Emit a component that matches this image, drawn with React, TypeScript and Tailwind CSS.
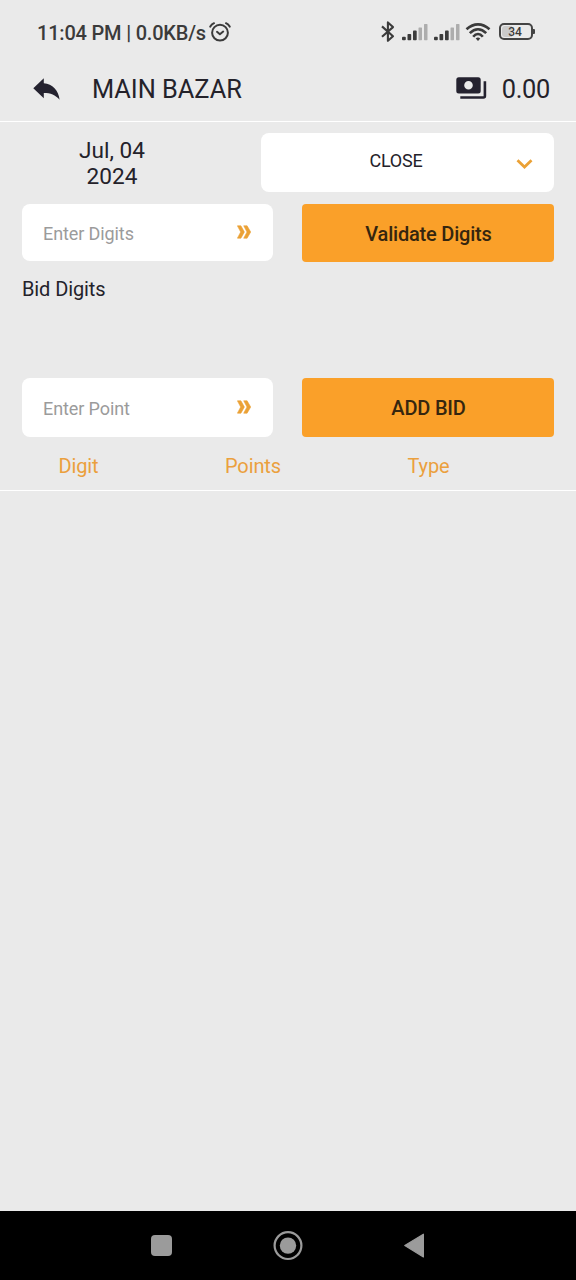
import React from 'react';
import clsx from 'clsx';

const SignalIcon: React.FC<{ className?: string }> = ({ className }) => (
  <svg viewBox="0 0 26 17" className={clsx('w-[26px] h-[17px] shrink-0', className)}>
    <g fill="#3b3b3b">
      <rect x="0" y="12.8" width="3.8" height="3.4" rx="1" />
      <rect x="5.5" y="9.9" width="3.7" height="6.3" rx="0.8" />
      <rect x="11" y="6.6" width="3.7" height="9.6" rx="0.8" />
    </g>
    <g fill="#adadad">
      <rect x="16.5" y="3.4" width="3.5" height="12.8" rx="0.6" />
      <rect x="22" y="0.1" width="3.5" height="16.1" rx="0.6" />
    </g>
  </svg>
);

const AlarmIcon = () => (
  <svg viewBox="0 0 22 20" className="w-[22px] h-5 shrink-0" fill="none" stroke="#3b3b3b" strokeWidth="2" strokeLinecap="round">
    <circle cx="11" cy="10.7" r="7.9" />
    <path d="M8 9.8l2.9 2.5 3.3-2.7" strokeLinejoin="round" />
    <path d="M1.3 4.6Q2.6 2.3 5 1.2M20.7 4.6Q19.4 2.3 17 1.2" />
  </svg>
);

const BluetoothIcon = () => (
  <svg viewBox="0 0 14 22" className="w-3.5 h-[22px] shrink-0" fill="none" stroke="#3b3b3b" strokeWidth="2.1" strokeLinejoin="round">
    <path d="M1 5.4L12 15.2 6.9 19.8V1.4L12 6.1 1 15.8" />
  </svg>
);

const WifiIcon = () => (
  <svg viewBox="0 0 26 19" className="w-[26px] h-[19px] shrink-0" fill="none" stroke="#3b3b3b" strokeWidth="2.6">
    <path d="M1.5 6.3Q7 1.4 13 1.4T24.5 6.3" />
    <path d="M4.8 10.2Q8.7 6.2 13 6.2T21.2 10.2" />
    <path d="M8.2 13.8Q10.4 11 13 11T17.8 13.8" />
    <path d="M10.7 15.4Q13 13.8 15.3 15.4L13 18z" fill="#3b3b3b" stroke="none" />
  </svg>
);

const BatteryIcon = () => (
  <div className="mb-px flex items-center shrink-0">
    <div className="w-[34px] h-[17px] rounded-[5px] border-2 border-[#444] p-px">
      <div className="h-full flex items-center justify-center rounded-[3px] bg-linear-to-r from-[#cbcbcb] from-34% to-transparent to-34% pt-px pr-0.5 text-[12px] leading-none font-medium text-[#3b3b3b]">
        34
      </div>
    </div>
    <div className="w-0.5 h-[5px] rounded-r-[1px] bg-[#444]" />
  </div>
);

const ReplyIcon = () => (
  <svg viewBox="0 0 27 22" className="w-[27px] h-[22px] shrink-0" fill="#24222f">
    <path d="M0.3 10.2L10.8 0.3V5.2C19.5 6 25.5 12 26.6 21.8C22.5 16.8 17.5 15 10.8 15V20.2z" />
  </svg>
);

const WalletIcon = () => (
  <svg viewBox="0 0 31 23" className="mb-0.5 w-[31px] h-[23px] shrink-0">
    <path fill="#24222f" fillRule="evenodd" d="M2.8 0.2H22.2A2.5 2.5 0 0 1 24.7 2.7V14A2.5 2.5 0 0 1 22.2 16.5H2.8A2.5 2.5 0 0 1 0.3 14V2.7A2.5 2.5 0 0 1 2.8 0.2zM12.5 4a4.3 4.3 0 1 0 0 8.6a4.3 4.3 0 0 0 0-8.6z" />
    <path fill="none" stroke="#24222f" strokeWidth="2.6" d="M28.9 4.2V19Q28.9 20.5 27.4 20.5H4.3" />
  </svg>
);

const DoubleArrow = () => (
  <svg viewBox="0 0 14 14" className="mb-px w-3.5 h-3.5 shrink-0" fill="#eba135" stroke="#eba135" strokeWidth="0.6" strokeLinejoin="round">
    <path d="M0.4 0.8H3.9L7.4 7 3.9 13.2H0.4L3.7 7zM6.7 0.8H10.1L13.7 7 10.1 13.2H6.7L10 7z" />
  </svg>
);

interface FieldProps {
  placeholder: string;
  className?: string;
}

const Field: React.FC<FieldProps> = ({ placeholder, className }) => (
  <div className={clsx('w-[251px] flex items-center justify-between rounded-lg bg-white pl-[21px] pr-[22px]', className)}>
    <span className="pt-0.5 text-[18px] leading-none tracking-[-0.1px] text-[#9b9b9b]">{placeholder}</span>
    <DoubleArrow />
  </div>
);

const Button: React.FC<{ children: React.ReactNode }> = ({ children }) => (
  <button className="w-[252px] rounded-[4px] bg-[#faa029] pt-px pl-px text-[20px] leading-none font-medium tracking-[-0.2px] text-[#35260f]">
    {children}
  </button>
);

export default function App() {
  return (
    <div className="w-[576px] h-[1280px] flex flex-col overflow-hidden bg-[#eaeaea] text-[#24222a] font-['Roboto',sans-serif]">
      {/* Status bar */}
      <div className="h-16 shrink-0 flex items-center pl-[37px] pr-[41px] text-[#3b3b3b]">
        <span className="w-[172px] pt-px whitespace-nowrap text-[20px] font-medium leading-none tracking-[-0.2px]">11:04 PM | 0.0KB/s</span>
        <AlarmIcon />
        <div className="ml-auto flex items-center">
          <BluetoothIcon />
          <SignalIcon className="ml-[7px]" />
          <SignalIcon className="ml-1.5" />
          <div className="ml-[5px] mr-2 flex"><WifiIcon /></div>
          <BatteryIcon />
        </div>
      </div>

      {/* Header */}
      <header className="h-[58px] shrink-0 flex items-center border-b border-white pl-[33px] pr-[26px] pb-[7px]">
        <ReplyIcon />
        <h1 className="ml-[31px] pl-px pt-0.5 text-[25.4px] leading-none tracking-[-0.05px]">MAIN BAZAR</h1>
        <div className="ml-auto flex items-center gap-[15px]">
          <WalletIcon />
          <span className="pt-0.5 text-[25.4px] leading-none tracking-[-0.3px]">0.00</span>
        </div>
      </header>

      {/* Bid form */}
      <main className="flex-1 flex flex-col">
        <div className="flex pt-[11px] px-[22px]">
          <div className="w-[180px] pt-[5px] text-center text-[22.6px] leading-[26px]">
            Jul, 04
            <br />
            2024
          </div>
          <div className="ml-auto w-[293px] h-[59px] flex items-center rounded-lg bg-white pl-4 pr-[21px]">
            <span className="flex-1 pb-1 text-center text-[18px] leading-none tracking-[-0.2px]">CLOSE</span>
            <svg viewBox="0 0 18 12" className="mt-0.5 w-[18px] h-3" fill="none" stroke="#eba135" strokeWidth="2.8">
              <path d="M2.5 2.3l7 6.7 7-6.7" />
            </svg>
          </div>
        </div>

        <div className="mt-3 h-[58px] flex justify-between px-[22px]">
          <Field placeholder="Enter Digits" className="h-[57px]" />
          <Button>Validate Digits</Button>
        </div>

        <div className="h-[116px] px-[22px] pt-[17px] text-[20px] leading-5 tracking-[-0.1px]">Bid Digits</div>

        <div className="h-[59px] flex justify-between px-[22px]">
          <Field placeholder="Enter Point" />
          <Button>ADD BID</Button>
        </div>

        <div className="h-[54px] grid grid-cols-[157px_192px_159px] items-center border-b border-white pt-1 text-center text-[20px] leading-none tracking-[-0.1px] text-[#eba03d]">
          <span>Digit</span>
          <span>Points</span>
          <span>Type</span>
        </div>
      </main>

      {/* Navigation bar */}
      <nav className="h-[69px] shrink-0 flex items-center bg-black pl-[151px]">
        <div className="w-[21px] h-[21px] rounded-[4px] bg-[#9b9b9b]" />
        <svg viewBox="0 0 30 30" className="ml-[101px] w-[30px] h-[30px]">
          <circle cx="15" cy="14.6" r="13.4" fill="none" stroke="#9b9b9b" strokeWidth="2.2" />
          <circle cx="15" cy="14.6" r="8.2" fill="#9b9b9b" />
        </svg>
        <svg viewBox="0 0 22 26" className="ml-[101px] w-[22px] h-[26px]" fill="#9b9b9b" stroke="#9b9b9b" strokeWidth="1.2" strokeLinejoin="round">
          <path d="M0.8 12.6L19.4 1.2V24z" />
        </svg>
      </nav>
    </div>
  );
}
